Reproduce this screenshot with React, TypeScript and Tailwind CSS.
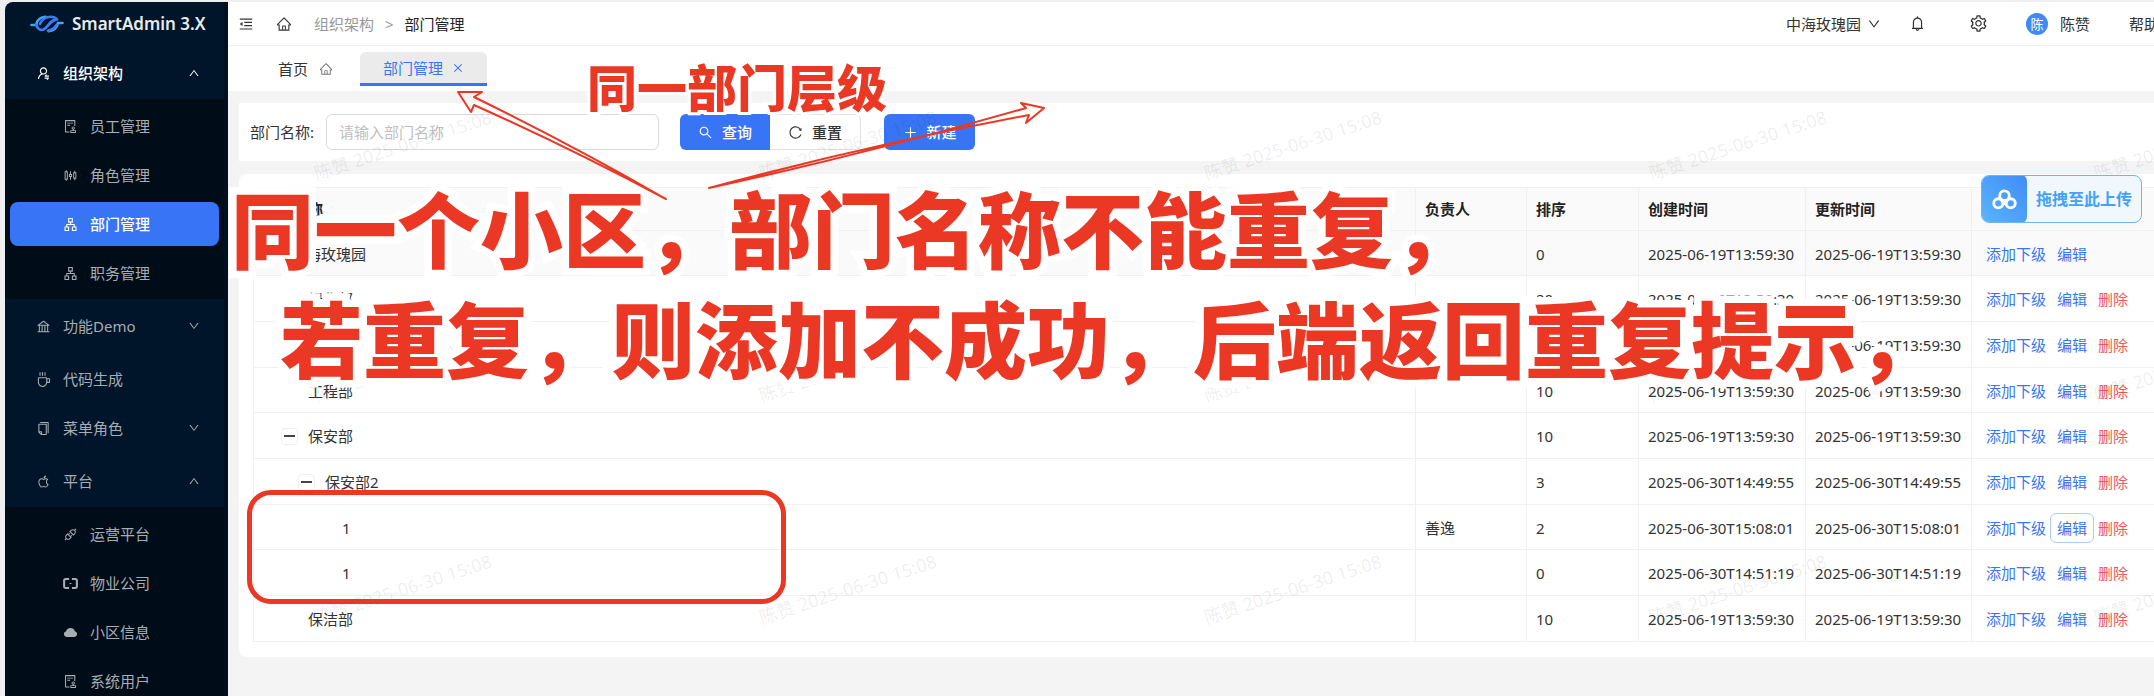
import type { ComponentType, ReactNode } from "react";
import {
  AiFillCloud,
  AiOutlineApartment,
  AiOutlineApi,
  AiOutlineApple,
  AiOutlineAudit,
  AiOutlineBank,
  AiOutlineBell,
  AiOutlineClose,
  AiOutlineCoffee,
  AiOutlineCopy,
  AiOutlineDown,
  AiOutlineHome,
  AiOutlineMenuFold,
  AiOutlinePlus,
  AiOutlineReload,
  AiOutlineSearch,
  AiOutlineSetting,
  AiOutlineSliders,
  AiOutlineUp,
  AiOutlineUserSwitch,
} from "react-icons/ai";
import { clsx } from "clsx";

type IconType = ComponentType<{ className?: string }>;

interface MenuItem {
  label: string;
  icon: IconType;
  open?: boolean;
  selected?: boolean;
  expandable?: boolean;
  children?: MenuItem[];
}

interface Department {
  id: number;
  name: string;
  level: number;
  expanded?: boolean;
  manager?: string;
  sort: number;
  time: string;
  root?: boolean;
  focused?: boolean;
}

function BracketIcon({ className }: { className?: string }) {
  return (
    <svg viewBox="0 0 16 16" className={className} fill="none" stroke="currentColor">
      <path d="M6.500 3.200H2.800A1.600 1.600 0 0 0 1.200 4.800v6.400a1.600 1.600 0 0 0 1.600 1.600H6.500M9.500 3.200h3.700A1.600 1.600 0 0 1 14.800 4.800v6.400a1.600 1.600 0 0 1-1.600 1.600H9.500" strokeWidth="2.200" />
      <path d="M7 8h2" strokeWidth="1.200" />
    </svg>
  );
}

const menus: MenuItem[] = [
  {
    label: "组织架构",
    icon: AiOutlineUserSwitch,
    open: true,
    selected: true,
    expandable: true,
    children: [
      { label: "员工管理", icon: AiOutlineAudit },
      { label: "角色管理", icon: AiOutlineSliders },
      { label: "部门管理", icon: AiOutlineApartment, selected: true },
      { label: "职务管理", icon: AiOutlineApartment },
    ],
  },
  { label: "功能Demo", icon: AiOutlineBank, expandable: true },
  { label: "代码生成", icon: AiOutlineCoffee },
  { label: "菜单角色", icon: AiOutlineCopy, expandable: true },
  {
    label: "平台",
    icon: AiOutlineApple,
    open: true,
    expandable: true,
    children: [
      { label: "运营平台", icon: AiOutlineApi },
      { label: "物业公司", icon: BracketIcon },
      { label: "小区信息", icon: AiFillCloud },
      { label: "系统用户", icon: AiOutlineAudit },
    ],
  },
];

const departments: Department[] = [
  { id: 1, name: "中海玫瑰园", level: 0, expanded: true, sort: 0, time: "2025-06-19T13:59:30", root: true },
  { id: 2, name: "绿化部", level: 1, sort: 20, time: "2025-06-19T13:59:30" },
  { id: 3, name: "客服部", level: 1, sort: 10, time: "2025-06-19T13:59:30" },
  { id: 4, name: "工程部", level: 1, sort: 10, time: "2025-06-19T13:59:30" },
  { id: 5, name: "保安部", level: 1, expanded: true, sort: 10, time: "2025-06-19T13:59:30" },
  { id: 6, name: "保安部2", level: 2, expanded: true, sort: 3, time: "2025-06-30T14:49:55" },
  { id: 7, name: "1", level: 3, manager: "善逸", sort: 2, time: "2025-06-30T15:08:01", focused: true },
  { id: 8, name: "1", level: 3, sort: 0, time: "2025-06-30T14:51:19" },
  { id: 9, name: "保洁部", level: 1, sort: 10, time: "2025-06-19T13:59:30" },
];

function Logo() {
  return (
    <svg viewBox="0 0 34 18" className="h-[18px] w-[34px]" fill="none" strokeLinecap="round">
      <path d="M1.500 10H6C7 5 11 2 15.500 1.800" stroke="#45a5f5" strokeWidth="2.600" />
      <path d="M6.500 10c.500 4 4 5.500 7 4.500 4-1.500 6-8.500 11.500-9.500" stroke="#3b7cf5" strokeWidth="2.800" />
      <path d="M10 9c1.500-3.500 4-6 7.500-6.800 4-.900 7.500-.200 9.500 2.300" stroke="#3b7cf5" strokeWidth="2.600" />
      <path d="M32.500 8H28c-1 5-5 8-9.500 8.200" stroke="#45a5f5" strokeWidth="2.600" />
      <path d="M18 15.800c3.500-.800 6.500-3 8.500-5.800" stroke="#3b7cf5" strokeWidth="2.600" />
    </svg>
  );
}

function SubMenu({ items }: { items: MenuItem[] }) {
  return (
    <ul className="flex flex-col gap-[5px] bg-[#000c17] pt-[5px] pb-1">
      {items.map(({ label, icon: Icon, selected }) => (
        <li key={label} className="px-[5px]">
          <a
            href="#"
            className={clsx(
              "flex h-11 items-center gap-3 rounded-lg pl-[53px]",
              selected ? "bg-[#3875f6] font-medium text-white" : "text-[#a6adb4]"
            )}
          >
            <Icon className="size-[15px]" />
            {label}
          </a>
        </li>
      ))}
    </ul>
  );
}

function Sidebar() {
  return (
    <aside className="flex w-[223px] shrink-0 flex-col overflow-hidden rounded-tl-lg border-r-4 border-[#011020] bg-[#001529]">
      <div className="flex h-11 shrink-0 items-center gap-2 pl-[25px] text-[17px] font-semibold whitespace-nowrap text-[#e8ebee]">
        <Logo />
        SmartAdmin 3.X
      </div>
      <nav>
        {menus.map(({ label, icon: Icon, open, selected, expandable, children }) => (
          <div key={label} className="pt-[5px]">
            <button
              type="button"
              className={clsx(
                "flex h-11 w-full items-center gap-3 pr-6 pl-[31px]",
                selected ? "font-medium text-white" : "text-[#a6adb4]"
              )}
            >
              <Icon className="size-[15px]" />
              <span className="grow text-left">{label}</span>
              {expandable && (open ? <AiOutlineUp className="size-3" /> : <AiOutlineDown className="size-3" />)}
            </button>
            {expandable && <div className="h-1" />}
            {children && <SubMenu items={children} />}
          </div>
        ))}
      </nav>
    </aside>
  );
}

function Header() {
  return (
    <header className="flex h-11 shrink-0 items-center justify-between border-b border-[#f0f0f0] bg-white pl-[10px] text-[#333]">
      <div className="flex items-center">
        <button type="button" aria-label="收起菜单" className="mr-[22px]">
          <AiOutlineMenuFold className="size-4" />
        </button>
        <a href="#" aria-label="首页" className="mr-[22px]">
          <AiOutlineHome className="size-4" />
        </a>
        <nav className="flex items-center gap-[11px]">
          <span className="text-[#999]">组织架构</span>
          <span className="text-[#999]">&gt;</span>
          <span className="text-[#222]">部门管理</span>
        </nav>
      </div>
      <div className="flex items-center">
        <button type="button" className="mr-7 flex items-center gap-[6px]">
          中海玫瑰园
          <AiOutlineDown className="size-[14px]" />
        </button>
        <button type="button" aria-label="消息" className="mr-[43px]">
          <AiOutlineBell className="size-[17px]" />
        </button>
        <button type="button" aria-label="设置" className="mr-[38px]">
          <AiOutlineSetting className="size-[19px]" />
        </button>
        <button type="button" className="mr-[39px] flex items-center gap-3">
          <span className="flex size-[22px] items-center justify-center rounded-full bg-[#3b8cf7] text-[13px] text-white">
            陈
          </span>
          陈赞
        </button>
        <a href="#" className="w-[25px] overflow-hidden whitespace-nowrap">
          帮助文档
        </a>
      </div>
    </header>
  );
}

function PageTabs() {
  return (
    <div className="flex h-[45px] shrink-0 items-end gap-[27px] bg-white pb-[5px] pl-[50px] text-[#333]">
      <button type="button" className="flex h-[34px] items-center gap-[11px]">
        首页
        <AiOutlineHome className="size-[14px] text-[#777]" />
      </button>
      <button
        type="button"
        className="flex h-[34px] w-[127px] items-center justify-center gap-[9px] rounded-t-md border-b-[3px] border-[#3875f6] bg-[#ebebeb] text-[#3875f6]"
      >
        部门管理
        <AiOutlineClose className="size-3" />
      </button>
    </div>
  );
}

function SearchForm() {
  return (
    <form className="flex h-[58px] shrink-0 items-center bg-white pl-[11px] text-[#333]">
      <label htmlFor="dept-name" className="mr-3">
        部门名称:
      </label>
      <input
        id="dept-name"
        placeholder="请输入部门名称"
        className="h-9 w-[333px] rounded-md border border-[#d9d9d9] px-3 placeholder:text-[#bfbfbf]"
      />
      <button
        type="button"
        className="ml-[21px] flex h-9 w-[90px] items-center justify-center gap-[9px] rounded-l-md bg-[#3875f6] font-medium text-white"
      >
        <AiOutlineSearch className="size-[15px]" />
        查询
      </button>
      <button
        type="button"
        className="flex h-9 w-[91px] items-center justify-center gap-[9px] rounded-r-md border border-l-0 border-[#e2e2e2] font-medium"
      >
        <AiOutlineReload className="size-[15px]" />
        重置
      </button>
      <button
        type="button"
        className="ml-[23px] flex h-9 w-[91px] items-center justify-center gap-[9px] rounded-md bg-[#3875f6] font-medium text-white"
      >
        <AiOutlinePlus className="size-[15px]" />
        新建
      </button>
    </form>
  );
}

function Cell({ children }: { children?: ReactNode }) {
  return <td className="border-b border-l border-[#f0f0f0] px-[9px] pt-px whitespace-nowrap">{children}</td>;
}

function DepartmentRow({ dept }: { dept: Department }) {
  return (
    <tr className={clsx("h-[46px] nth-[3n+1]:h-[45px]", dept.root && "bg-[#fafafa]")}>
      <Cell>
        <div className="flex items-center gap-[10px]">
          {/* one spacer per tree level */}
          <div style={{ width: dept.level * 17 }} className="-mr-[9px]" />
          {dept.expanded ? (
            <button
              type="button"
              aria-label="收起"
              className="flex size-[17px] items-center justify-center rounded border border-[#f0f0f0] bg-white"
            >
              <span className="h-[2px] w-[11px] bg-[#444]" />
            </button>
          ) : (
            <span className="size-[17px]" />
          )}
          {dept.name}
        </div>
      </Cell>
      <Cell>{dept.manager}</Cell>
      <Cell>{dept.sort}</Cell>
      <Cell>{dept.time}</Cell>
      <Cell>{dept.time}</Cell>
      <Cell>
        <div className="flex items-center gap-1 pl-[5px] text-[#3875f6]">
          <button type="button">添加下级</button>
          <button
            type="button"
            className={clsx("h-[30px] rounded-md border px-[6px]", dept.focused ? "border-[#a9ccfb]" : "border-transparent")}
          >
            编辑
          </button>
          {!dept.root && (
            <button type="button" className="text-[#f0595a]">
              删除
            </button>
          )}
        </div>
      </Cell>
    </tr>
  );
}

function DepartmentTable() {
  return (
    <section className="rounded-l-lg bg-white pt-[13px] pb-[15px] pl-[14px]">
      <table className="w-full table-fixed border-separate border-spacing-0 border-t border-[#f0f0f0] text-[#333]">
        <colgroup>
          <col />
          <col className="w-[111px]" />
          <col className="w-[112px]" />
          <col className="w-[167px]" />
          <col className="w-[166px]" />
          <col className="w-[183px]" />
        </colgroup>
        <thead>
          <tr className="h-[43px] bg-[#fafafa] text-left text-[#222]">
            {["部门名称", "负责人", "排序", "创建时间", "更新时间", "操作"].map((title) => (
              <th key={title} className="border-b border-l border-[#f0f0f0] px-[9px] font-bold">
                {title}
              </th>
            ))}
          </tr>
        </thead>
        <tbody>
          {departments.map((dept) => (
            <DepartmentRow key={dept.id} dept={dept} />
          ))}
        </tbody>
      </table>
    </section>
  );
}

function Watermark() {
  return (
    <div className="pointer-events-none absolute inset-0 overflow-hidden">
      <div className="grid grid-cols-[repeat(5,445px)] pt-[23px] pl-[90px]">
        {Array.from({ length: 15 }, (_, i) => (
          <div key={i} className="flex h-[222px] items-end">
            <span className="mb-[63px] origin-bottom-left -rotate-[18deg] text-[18px] whitespace-nowrap text-black/8">
              陈赞 2025-06-30 15:08
            </span>
          </div>
        ))}
      </div>
    </div>
  );
}

function UploadBadge() {
  return (
    <button
      type="button"
      className="absolute top-[175px] right-3 flex h-12 w-[161px] items-center overflow-hidden rounded-lg border border-[#6db5fb] bg-[#f0f8fe] text-base font-bold text-[#43a2f7]"
    >
      <span className="flex h-12 w-[45px] items-center justify-center rounded-r-md bg-linear-to-tr from-[#5cb4fb] to-[#3f8cf8]">
        <svg viewBox="0 0 26 22" className="h-[21px] w-[25px]" fill="none" stroke="white" strokeWidth="3">
          <circle cx="13" cy="7" r="5" />
          <circle cx="6.500" cy="15" r="4.800" />
          <circle cx="19.500" cy="15" r="4.800" />
          <path d="M9.500 11.500 13 15l3.500-3.500" />
        </svg>
      </span>
      <span className="grow text-center">拖拽至此上传</span>
    </button>
  );
}

// Red mark-up drawn on top of the page
function Annotations() {
  return (
    <div className="pointer-events-none absolute inset-0 overflow-hidden font-black whitespace-nowrap text-[#ea3824]">
      <p className="absolute top-[52px] left-[587px] text-[50px] leading-[72px] [paint-order:stroke_fill] [-webkit-text-stroke:6px_white]">
        同一部门层级
      </p>
      <p className="absolute top-[170px] left-[231px] text-[83px] leading-[120px] [paint-order:stroke_fill] [-webkit-text-stroke:15px_white]">
        同一个小区，部门名称不能重复，
      </p>
      <p className="absolute top-[280px] left-[280px] text-[83px] leading-[120px] [paint-order:stroke_fill] [-webkit-text-stroke:15px_white]">
        若重复，则添加不成功，后端返回重复提示，
      </p>
      <svg className="absolute inset-0 size-full" fill="none" stroke="#ea3824" strokeWidth="2" strokeLinejoin="round">
        <path d="M458 92l24 0-8 5q100 49 192 102-98-52-192-94l-3 7z" />
        <path d="M1044 108l-23-5 5 5q-160 46-317 80 160-43 320-73l-3 8z" />
      </svg>
      <div className="absolute top-[490px] left-[247px] h-[114px] w-[539px] rounded-3xl border-5 border-[#ea3824]" />
    </div>
  );
}

export default function App() {
  return (
    <div
      lang="zh-CN"
      className="relative flex h-screen overflow-hidden bg-[#eeeff1] pt-[2px] pl-[5px] font-['Noto_Sans','Noto_Sans_CJK_SC',sans-serif] text-[15px] leading-[22px]"
    >
      <Sidebar />
      <div className="relative flex min-w-0 grow flex-col bg-[#f4f4f4]">
        <Header />
        <PageTabs />
        <main className="flex flex-col gap-[13px] pt-3 pl-[11px]">
          <SearchForm />
          <DepartmentTable />
        </main>
        <Watermark />
      </div>
      <UploadBadge />
      <Annotations />
    </div>
  );
}
